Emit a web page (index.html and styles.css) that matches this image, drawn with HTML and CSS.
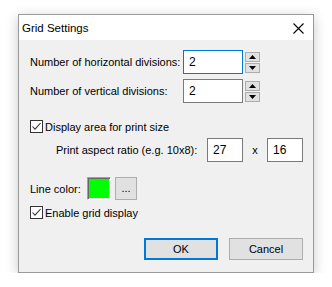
FILE: index.html
```html
<!DOCTYPE html>
<html>
<head>
<meta charset="utf-8">
<link rel="stylesheet" href="styles.css">
</head>
<body>
<div class="window">
  <div class="titlebar">
    <span class="title">Grid Settings</span>
    <svg class="close" width="11" height="11" viewBox="0 0 11 11"><path d="M0.5 0.5 L10.5 10.5 M10.5 0.5 L0.5 10.5" stroke="#000" stroke-width="1.1" fill="none"/></svg>
  </div>
  <div class="content">
    <div class="row spin-row first">
      <span class="label wide">Number of horizontal divisions:</span>
      <div class="textbox focused">2</div>
      <div class="spinner">
        <div class="spin-btn"><svg width="7" height="4" viewBox="0 0 7 4"><path d="M3.5 0 L7 4 L0 4 Z" fill="#000"/></svg></div>
        <div class="spin-btn"><svg width="7" height="4" viewBox="0 0 7 4"><path d="M0 0 L7 0 L3.5 4 Z" fill="#000"/></svg></div>
      </div>
    </div>
    <div class="row spin-row second">
      <span class="label wide">Number of vertical divisions:</span>
      <div class="textbox">2</div>
      <div class="spinner">
        <div class="spin-btn"><svg width="7" height="4" viewBox="0 0 7 4"><path d="M3.5 0 L7 4 L0 4 Z" fill="#000"/></svg></div>
        <div class="spin-btn"><svg width="7" height="4" viewBox="0 0 7 4"><path d="M0 0 L7 0 L3.5 4 Z" fill="#000"/></svg></div>
      </div>
    </div>
    <div class="row check-row print">
      <span class="checkbox"><svg width="11" height="11" viewBox="0 0 11 11"><path d="M1.5 5.5 L4 8.2 L9.6 2" stroke="#333" stroke-width="1.1" fill="none"/></svg></span>
      <span class="check-label">Display area for print size</span>
    </div>
    <div class="row aspect-row">
      <span class="label aspect-label">Print aspect ratio (e.g. 10x8):</span>
      <div class="textbox small">27</div>
      <span class="times">x</span>
      <div class="textbox small">16</div>
    </div>
    <div class="row color-row">
      <span class="label color-label">Line color:</span>
      <span class="swatch"></span>
      <div class="dots-btn">...</div>
    </div>
    <div class="row check-row enable">
      <span class="checkbox"><svg width="11" height="11" viewBox="0 0 11 11"><path d="M1.5 5.5 L4 8.2 L9.6 2" stroke="#333" stroke-width="1.1" fill="none"/></svg></span>
      <span class="check-label">Enable grid display</span>
    </div>
    <div class="row buttons">
      <div class="btn default">OK</div>
      <div class="btn">Cancel</div>
    </div>
  </div>
</div>
</body>
</html>
```

FILE: styles.css
```css
html, body {
  margin: 0;
  padding: 0;
  background: #ffffff;
}
body {
  font-family: "Liberation Sans", Arial, sans-serif;
  font-size: 11px;
  color: #000;
}
.window {
  margin: 14px 0 0 18px;
  width: 294px;
  height: 257px;
  border: 1px solid #9a9a9a;
  background: #f0f0f0;
  box-shadow: 0 3px 12px rgba(0, 0, 0, 0.22);
  display: flex;
  flex-direction: column;
}
.titlebar {
  height: 25px;
  background: #ffffff;
  display: flex;
  align-items: center;
  justify-content: space-between;
  padding: 0 9px 0 3px;
}
.title {
  font-size: 11.5px;
}
.close {
  display: block;
  margin-top: 1px;
}
.content {
  flex: 1;
  display: flex;
  flex-direction: column;
  padding: 0 10px 0 11px;
}
.row {
  display: flex;
  align-items: center;
}
.spin-row {
  height: 24px;
}
.first { margin-top: 10px; }
.second { margin-top: 5px; }
.label.wide {
  width: 153px;
  flex: none;
}
.textbox {
  box-sizing: border-box;
  width: 60px;
  height: 24px;
  border: 1px solid #7a7a7a;
  background: #fff;
  padding-left: 5px;
  display: flex;
  align-items: center;
  font-size: 12px;
}
.textbox.focused {
  border-color: #0078d7;
}
.spinner {
  display: flex;
  flex-direction: column;
  gap: 1px;
  margin-left: 2px;
}
.spin-btn {
  box-sizing: border-box;
  width: 15px;
  height: 10px;
  border: 1px solid #adadad;
  background: #e1e1e1;
  display: flex;
  align-items: center;
  justify-content: center;
}
.spin-btn svg { display: block; }
.check-row {
  height: 13px;
}
.print { margin-top: 17px; }
.checkbox {
  box-sizing: border-box;
  width: 13px;
  height: 13px;
  border: 1px solid #333;
  background: #fff;
  display: flex;
  align-items: center;
  justify-content: center;
  flex: none;
}
.checkbox svg { display: block; }
.check-label {
  margin-left: 2px;
}
.aspect-row {
  margin-top: 5px;
  height: 24px;
  padding-left: 26px;
}
.aspect-label {
  width: 151px;
  flex: none;
}
.textbox.small {
  width: 36px;
}
.times {
  width: 24px;
  text-align: center;
}
.color-row {
  margin-top: 15px;
  height: 23px;
}
.color-label {
  width: 57px;
  flex: none;
}
.swatch {
  box-sizing: border-box;
  width: 24px;
  height: 23px;
  background: #00ff00;
  border-top: 1px solid #a0a0a0;
  border-left: 1px solid #a0a0a0;
  border-right: 1px solid #ffffff;
  border-bottom: 1px solid #ffffff;
  box-shadow: inset 1px 1px 0 #696969, inset -1px -1px 0 #e3e3e3;
}
.dots-btn {
  box-sizing: border-box;
  width: 22px;
  height: 23px;
  margin-left: 4px;
  border: 1px solid #adadad;
  background: #e1e1e1;
  display: flex;
  align-items: flex-end;
  justify-content: center;
  padding-bottom: 5px;
  line-height: 1;
}
.enable { margin-top: 6px; }
.buttons {
  margin-top: 19px;
  justify-content: flex-end;
  gap: 11px;
}
.btn {
  box-sizing: border-box;
  width: 74px;
  height: 22px;
  border: 1px solid #adadad;
  background: #e1e1e1;
  display: flex;
  align-items: center;
  justify-content: center;
}
.btn.default {
  border: 2px solid #0078d7;
}
```
